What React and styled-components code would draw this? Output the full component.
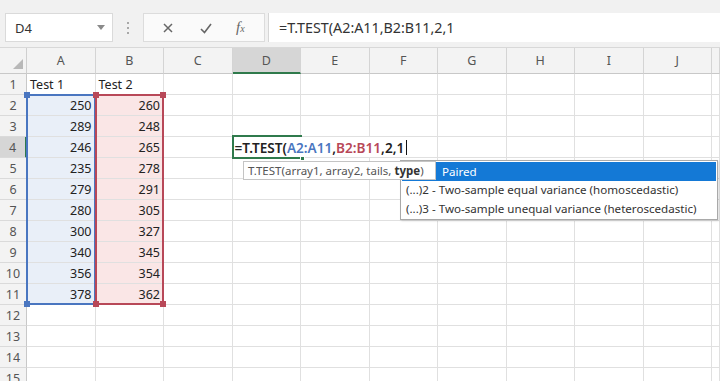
import React from "react";
import styled, { createGlobalStyle } from "styled-components";

const HEAD_W = 27;
const HEAD_H = 26;
const COL_W = 68.5;
const ROW_H = 21;

const COLS = ["A", "B", "C", "D", "E", "F", "G", "H", "I", "J", ""];
const ROWS = Array.from({ length: 15 }, (_, i) => i + 1);

const values = {
  1: ["Test 1", "Test 2"],
  2: [250, 260],
  3: [289, 248],
  4: [246, 265],
  5: [235, 278],
  6: [279, 291],
  7: [280, 305],
  8: [300, 327],
  9: [340, 345],
  10: [356, 354],
  11: [378, 362],
};

const GlobalStyle = createGlobalStyle`
  html, body {
    margin: 0;
    padding: 0;
    overflow: hidden;
    background: #ffffff;
  }
  * { box-sizing: border-box; }
`;

const App = () => {
  return (
    <Page>
      <GlobalStyle />
      <Toolbar>
        <NameBox>
          <span>D4</span>
          <svg width="8" height="5" viewBox="0 0 8 5">
            <path d="M0 0 L8 0 L4 5 Z" fill="#8a8a8a" />
          </svg>
        </NameBox>
        <Separator>
          <Dot />
          <Dot />
          <Dot />
        </Separator>
        <FxBox>
          <svg width="16" height="16" viewBox="0 0 16 16">
            <path d="M4 4 L12 12 M12 4 L4 12" stroke="#666" strokeWidth="1.5" />
          </svg>
          <svg width="16" height="16" viewBox="0 0 16 16">
            <path d="M3 9 L6.5 12.5 L13 4" stroke="#666" strokeWidth="1.6" fill="none" />
          </svg>
          <FxLabel>
            f<sub>x</sub>
          </FxLabel>
        </FxBox>
        <FormulaBar>=T.TEST(A2:A11,B2:B11,2,1</FormulaBar>
      </Toolbar>

      <Sheet>
        <Grid>
          <Corner>
            <svg width="10" height="10" viewBox="0 0 10 10">
              <path d="M10 0 L10 10 L0 10 Z" fill="#b8b8b8" />
            </svg>
          </Corner>
          {COLS.map((c, i) => (
            <ColHead key={"h" + i} $active={c === "D"}>
              {c}
            </ColHead>
          ))}
          {ROWS.map((r) => (
            <React.Fragment key={r}>
              <RowHead $active={r === 4}>{r}</RowHead>
              {COLS.map((c, i) => {
                const v = values[r] && values[r][i];
                const inRange = r >= 2 && r <= 11;
                let tone;
                if (inRange && i === 0) tone = "blue";
                if (inRange && i === 1) tone = "red";
                return (
                  <Cell
                    key={c + r + i}
                    $tone={tone}
                    $align={typeof v === "number" ? "right" : "left"}
                  >
                    {v}
                  </Cell>
                );
              })}
            </React.Fragment>
          ))}
        </Grid>

        <RangeBox $color="#4a76c0" $col={0} $row={2} $rows={10}>
          <Handle $color="#4a76c0" $x="left" $y="top" />
          <Handle $color="#4a76c0" $x="left" $y="bottom" />
        </RangeBox>
        <RangeBox $color="#b84858" $col={1} $row={2} $rows={10}>
          <Handle $color="#b84858" $x="left" $y="top" />
          <Handle $color="#b84858" $x="right" $y="top" />
          <Handle $color="#b84858" $x="left" $y="bottom" />
          <Handle $color="#b84858" $x="right" $y="bottom" />
        </RangeBox>

        <Editor>
          =T.TEST(<Ref $color="#4a76c0">A2:A11</Ref>,
          <Ref $color="#b84858">B2:B11</Ref>,2,1
          <Caret />
        </Editor>
        <ActiveCell>
          <FillHandle />
        </ActiveCell>

        <Suggestions>
          <Option $selected $indent={36}>Paired</Option>
          <Option>(...)2 - Two-sample equal variance (homoscedastic)</Option>
          <Option>(...)3 - Two-sample unequal variance (heteroscedastic)</Option>
        </Suggestions>
        <Tip>
          T.TEST(array1, array2, tails, <b>type</b>)
        </Tip>
      </Sheet>
    </Page>
  );
};

export default App;

const Page = styled.div`
  width: 720px;
  height: 381px;
  overflow: hidden;
  background: #ffffff;
  font-family: "Noto Sans", "Open Sans", sans-serif;
`;

const Toolbar = styled.div`
  height: 48px;
  display: flex;
  align-items: flex-start;
  padding-top: 13px;
  background: #f1f1f1;
  border-bottom: 1px solid #d8d8d8;
`;

const NameBox = styled.div`
  margin-left: 5px;
  width: 108px;
  height: 29px;
  display: flex;
  align-items: center;
  justify-content: space-between;
  padding: 0 7px 0 9px;
  background: #ffffff;
  border: 1px solid #dadada;
  font-size: 13px;
  color: #333;
`;

const Separator = styled.div`
  width: 30px;
  height: 29px;
  display: flex;
  flex-direction: column;
  align-items: center;
  justify-content: center;
  gap: 3px;
`;

const Dot = styled.span`
  width: 2px;
  height: 2px;
  background: #a8a8a8;
`;

const FxBox = styled.div`
  width: 122px;
  height: 29px;
  display: flex;
  align-items: center;
  gap: 22px;
  padding-left: 16px;
  background: #fafafa;
  border: 1px solid #dcdcdc;
`;

const FxLabel = styled.span`
  font-family: "Liberation Serif", serif;
  font-style: italic;
  font-size: 15px;
  color: #666;
  sub {
    font-size: 10px;
    vertical-align: baseline;
  }
`;

const FormulaBar = styled.div`
  margin-left: 3px;
  flex: 1;
  height: 29px;
  display: flex;
  align-items: center;
  padding-left: 10px;
  background: #ffffff;
  border-left: 1px solid #d6d6d6;
  font-size: 14.3px;
  color: #333;
`;

const Sheet = styled.div`
  position: relative;
`;

const Grid = styled.div`
  display: grid;
  grid-template-columns: ${HEAD_W}px repeat(10, ${COL_W}px) 1fr;
  grid-template-rows: ${HEAD_H}px;
  grid-auto-rows: ${ROW_H}px;
`;

const Corner = styled.div`
  display: flex;
  align-items: flex-end;
  justify-content: flex-end;
  padding: 0 3px 4px 0;
  background: #f3f3f3;
  border-right: 1px solid #cfcfcf;
  border-bottom: 1px solid #c8c8c8;
`;

const ColHead = styled.div`
  display: flex;
  align-items: center;
  justify-content: center;
  font-size: 12.5px;
  color: #555;
  background: ${(p) => (p.$active ? "#d6d6d6" : "#f3f3f3")};
  border-right: 1px solid #d4d4d4;
  border-bottom: ${(p) => (p.$active ? "2px solid #2f7a4c" : "1px solid #c8c8c8")};
`;

const RowHead = styled.div`
  display: flex;
  align-items: center;
  justify-content: center;
  font-size: 12.5px;
  color: #555;
  background: ${(p) => (p.$active ? "#d6d6d6" : "#f3f3f3")};
  border-right: ${(p) => (p.$active ? "2px solid #2f7a4c" : "1px solid #c8c8c8")};
  border-bottom: 1px solid #dadada;
`;

const tones = {
  blue: "#e9eff8",
  red: "#fae6e6",
};

const Cell = styled.div`
  display: flex;
  align-items: center;
  justify-content: ${(p) => (p.$align === "right" ? "flex-end" : "flex-start")};
  padding: 0 3px;
  font-size: 12.5px;
  color: #222;
  white-space: nowrap;
  background: ${(p) => tones[p.$tone] || "#ffffff"};
  border-right: 1px solid #e0e0e0;
  border-bottom: 1px solid #e0e0e0;
`;

const RangeBox = styled.div`
  position: absolute;
  left: ${(p) => HEAD_W + p.$col * COL_W - 1}px;
  top: ${(p) => HEAD_H + (p.$row - 1) * ROW_H - 1}px;
  width: ${COL_W + 1}px;
  height: ${(p) => p.$rows * ROW_H + 1}px;
  border: 2px solid ${(p) => p.$color};
  pointer-events: none;
`;

const Handle = styled.span`
  position: absolute;
  width: 6px;
  height: 6px;
  background: ${(p) => p.$color};
  ${(p) => (p.$x === "left" ? "left: -4px;" : "right: -4px;")}
  ${(p) => (p.$y === "top" ? "top: -4px;" : "bottom: -4px;")}
`;

const Editor = styled.div`
  position: absolute;
  left: ${HEAD_W + 3 * COL_W}px;
  top: ${HEAD_H + 3 * ROW_H}px;
  height: ${ROW_H - 1}px;
  display: flex;
  align-items: center;
  padding: 0 4px 0 2px;
  background: #ffffff;
  font-size: 13.6px;
  font-weight: 600;
  color: #222;
  white-space: nowrap;
`;

const Ref = styled.span`
  color: ${(p) => p.$color};
`;

const Caret = styled.span`
  display: inline-block;
  width: 1px;
  height: 15px;
  margin-left: 2px;
  background: #111;
`;

const ActiveCell = styled.div`
  position: absolute;
  left: ${HEAD_W + 3 * COL_W - 1}px;
  top: ${HEAD_H + 3 * ROW_H - 2}px;
  width: ${COL_W + 2}px;
  height: ${ROW_H + 3}px;
  border: 2px solid #2f7a4c;
  border-right: none;
  pointer-events: none;
`;

const FillHandle = styled.span`
  position: absolute;
  right: -3px;
  bottom: -4px;
  width: 5px;
  height: 5px;
  background: #2f7a4c;
  border: 1px solid #ffffff;
`;

const Suggestions = styled.div`
  position: absolute;
  left: 400px;
  top: 112px;
  width: 318px;
  padding: 1px;
  background: #ffffff;
  border: 1px solid #a9a9a9;
  box-shadow: 1px 1px 2px rgba(0, 0, 0, 0.15);
`;

const Option = styled.div`
  height: 18.5px;
  display: flex;
  align-items: center;
  padding-left: ${(p) => (p.$indent || 0) + 4}px;
  font-size: 11.6px;
  white-space: nowrap;
  color: ${(p) => (p.$selected ? "#ffffff" : "#333")};
  background: ${(p) => (p.$selected ? "#1479d6" : "transparent")};
`;

const Tip = styled.div`
  position: absolute;
  left: 243px;
  top: 113px;
  width: 193px;
  height: 19px;
  display: flex;
  align-items: center;
  padding-left: 4px;
  background: #ffffff;
  border: 1px solid #c4c4c4;
  font-size: 11.5px;
  color: #555;
  white-space: nowrap;
  b {
    color: #333;
    margin-left: 3px;
  }
`;
